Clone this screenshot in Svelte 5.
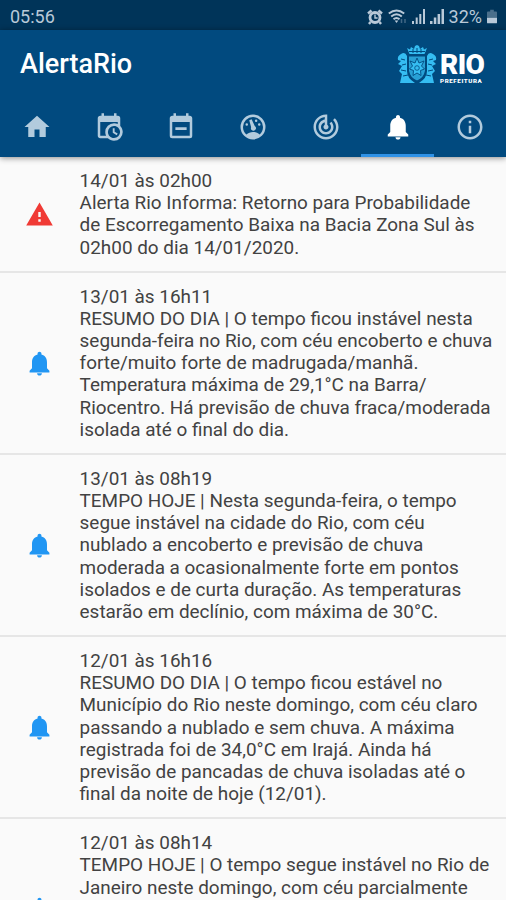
<script>
  const paths = {
    home: 'M10,20V14H14V20H19V12H22L12,3L2,12H5V20H10Z',
    calendarClock:
      'M15,13H16.5V15.82L18.94,17.23L18.19,18.53L15,16.69V13M19,8H5V19H9.67C9.24,18.09 9,17.07 9,16A7,7 0 0,1 16,9C17.07,9 18.09,9.24 19,9.67V8M5,21C3.89,21 3,20.1 3,19V5C3,3.89 3.89,3 5,3H6V1H8V3H16V1H18V3H19A2,2 0 0,1 21,5V11.1C22.24,12.36 23,14.09 23,16A7,7 0 0,1 16,23C14.09,23 12.36,22.24 11.1,21H5M16,11.15A4.85,4.85 0 0,0 11.15,16C11.15,18.68 13.32,20.85 16,20.85A4.85,4.85 0 0,0 20.85,16C20.85,13.32 18.68,11.15 16,11.15Z',
    calendar:
      'M19,19H5V8H19M16,1V3H8V1H6V3H5C3.89,3 3,3.89 3,5V19A2,2 0 0,0 5,21H19A2,2 0 0,0 21,19V5C21,3.89 20.1,3 19,3H18V1M16.5,12.2H7.5V14.4H16.5Z',
    gauge:
      'M17.3,18C19,16.5 20,14.4 20,12A8,8 0 0,0 4,12C4,14.4 5,16.5 6.7,18C8.2,16.7 10,16 12,16C14,16 15.9,16.7 17.3,18M12,2A10,10 0 0,1 12,22A10,10 0 0,1 12,2M7,9A1,1 0 0,1 7,11A1,1 0 0,1 7,9M17,9A1,1 0 0,1 17,11A1,1 0 0,1 17,9M14.5,6A1,1 0 0,1 14.5,8A1,1 0 0,1 14.5,6M9,6.5L10.9,5.8L13.4,11.2A2,2 0 1,1 10.5,12.2Z',
    radar:
      'M19.07 4.93l-1.41 1.41C19.1 7.79 20 9.79 20 12c0 4.42-3.58 8-8 8s-8-3.58-8-8c0-4.08 3.05-7.44 7-7.93v2.02C8.16 6.57 6 9.03 6 12c0 3.31 2.69 6 6 6s6-2.69 6-6c0-1.66-.67-3.16-1.76-4.24l-1.41 1.41C15.55 9.9 16 10.9 16 12c0 2.21-1.79 4-4 4s-4-1.79-4-4c0-1.86 1.28-3.41 3-3.86v2.14c-.6.35-1 .98-1 1.72 0 1.1.9 2 2 2s2-.9 2-2c0-.74-.4-1.38-1-1.72V2h-1C6.48 2 2 6.48 2 12s4.48 10 10 10 10-4.48 10-10c0-2.76-1.12-5.26-2.93-7.07z',
    bell: 'M12 22c1.1 0 2-.7 2-1.9h-4c0 1.2.89 1.9 2 1.9zm6.2-6v-5c0-3.27-1.64-5.74-4.6-6.42V3.8c0-.83-.77-1.5-1.6-1.5s-1.6.67-1.6 1.5v.78C7.44 5.26 5.8 7.73 5.8 11v5l-2 2v1.5h16.4V18l-2-2z',
    info: 'M11 17h2v-6h-2v6zm1-15C6.48 2 2 6.48 2 12s4.48 10 10 10 10-4.48 10-10S17.52 2 12 2zm0 18c-4.41 0-8-3.59-8-8s3.59-8 8-8 8 3.59 8 8-3.59 8-8 8zM11 9h2V7h-2v2z',
    warning: 'M1 21h22L12 2 1 21zm12-3h-2v-2h2v2zm0-4h-2v-4h2v4z',
  };

  const tabs = ['home', 'calendarClock', 'calendar', 'gauge', 'radar', 'bell', 'info'];
  let activeTab = 'bell';

  const alerts = [
    {
      icon: 'warning',
      date: '14/01 às 02h00',
      lines: [
        'Alerta Rio Informa: Retorno para Probabilidade',
        'de Escorregamento Baixa na Bacia Zona Sul às',
        '02h00 do dia 14/01/2020.',
      ],
    },
    {
      icon: 'bell',
      date: '13/01 às 16h11',
      lines: [
        'RESUMO DO DIA | O tempo ficou instável nesta',
        'segunda-feira no Rio, com céu encoberto e chuva',
        'forte/muito forte de madrugada/manhã.',
        'Temperatura máxima de 29,1°C na Barra/',
        'Riocentro. Há previsão de chuva fraca/moderada',
        'isolada até o final do dia.',
      ],
    },
    {
      icon: 'bell',
      date: '13/01 às 08h19',
      lines: [
        'TEMPO HOJE | Nesta segunda-feira, o tempo',
        'segue instável na cidade do Rio, com céu',
        'nublado a encoberto e previsão de chuva',
        'moderada a ocasionalmente forte em pontos',
        'isolados e de curta duração. As temperaturas',
        'estarão em declínio, com máxima de 30°C.',
      ],
    },
    {
      icon: 'bell',
      date: '12/01 às 16h16',
      lines: [
        'RESUMO DO DIA | O tempo ficou estável no',
        'Município do Rio neste domingo, com céu claro',
        'passando a nublado e sem chuva. A máxima',
        'registrada foi de 34,0°C em Irajá. Ainda há',
        'previsão de pancadas de chuva isoladas até o',
        'final da noite de hoje (12/01).',
      ],
    },
    {
      icon: 'bell',
      date: '12/01 às 08h14',
      lines: [
        'TEMPO HOJE | O tempo segue instável no Rio de',
        'Janeiro neste domingo, com céu parcialmente',
      ],
      cut: true,
    },
  ];
</script>

<style>
  :global(body) {
    background: #fafafa;
  }
  .screen {
    height: 900px;
    overflow: hidden;
    display: flex;
    flex-direction: column;
    font-family: Roboto, sans-serif;
    background: #fafafa;
  }
  .status {
    flex: none;
    height: 30px;
    padding: 3px 9px 0 10px;
    box-sizing: border-box;
    display: flex;
    align-items: center;
    justify-content: space-between;
    background: #003459;
    color: #b9c9d8;
    font-size: 18px;
  }
  .status-icons {
    display: flex;
    align-items: center;
    gap: 5px;
  }
  .status-icons svg {
    display: block;
  }
  .header {
    flex: none;
    height: 127px;
    background: #014a7f;
    box-shadow: 0 1px 6px rgba(0, 0, 0, 0.45);
    z-index: 1;
  }
  .title-bar {
    height: 68px;
    padding: 0 22px 0 20px;
    display: flex;
    align-items: center;
    justify-content: space-between;
  }
  h1 {
    margin: 0;
    font-size: 27px;
    font-weight: 500;
    color: #fff;
  }
  .logo {
    display: flex;
    align-items: center;
    gap: 3px;
    color: #fff;
    font-weight: 900;
  }
  .logo svg {
    display: block;
  }
  .logo-text {
    width: 44px;
    padding-top: 7px;
    white-space: nowrap;
  }
  .logo-name {
    font-size: 28px;
    line-height: 26px;
    letter-spacing: -0.6px;
  }
  .logo-sub {
    font-size: 6.2px;
    line-height: 6px;
    letter-spacing: 0.6px;
  }
  .tabs {
    height: 59px;
    display: flex;
  }
  .tab {
    flex: 1;
    padding: 2px 0 0 1px;
    border: 0;
    border-bottom: 3px solid transparent;
    background: none;
    color: #b2cbdd;
    display: flex;
    align-items: center;
    justify-content: center;
  }
  .tab.active {
    color: #fff;
    border-bottom-color: #2f92e6;
  }
  .tab svg {
    display: block;
    width: 30px;
    height: 30px;
  }
  .alert {
    flex: none;
    display: flex;
    align-items: center;
    box-sizing: border-box;
    border-bottom: 2px solid #e6e6e6;
    padding: 13px 0 12px;
  }
  .alert.cut {
    height: 182px;
  }
  .alert-icon {
    flex: none;
    width: 79.6px;
    display: flex;
    justify-content: center;
    color: #2196f3;
  }
  .alert-icon.warning {
    color: #f03a35;
  }
  .alert-icon svg {
    width: 29px;
    height: 29px;
  }
  .alert.cut .alert-text {
    align-self: flex-start;
  }
  .alert-text {
    font-size: 18.91px;
    line-height: 22.17px;
    color: #424242;
  }
  .alert-text p {
    margin: 0;
    white-space: nowrap;
  }
</style>

{#snippet icon(name)}
  <svg viewBox="0 0 24 24" fill="currentColor" fill-rule="evenodd"><path d={paths[name]} /></svg>
{/snippet}

<div class="screen">
  <div class="status">
    <span>05:56</span>
    <div class="status-icons">
      <!-- alarm -->
      <svg width="16" height="16" viewBox="0 0 16 16" fill="none" stroke="currentColor">
        <circle cx="8" cy="8.5" r="5" stroke-width="2.8" />
        <path d="M8 5.5V9h2.6" stroke-width="1.4" />
        <path d="M1 4.5L4.5 1.5M15 4.5L11.5 1.5M3.5 13L2 15M12.5 13L14 15" stroke-width="2.4" />
      </svg>
      <!-- wifi -->
      <svg width="19" height="16" viewBox="0 0 19 16" fill="none" stroke="currentColor" stroke-width="2">
        <path d="M.8 4.5Q8.5-1.5 16.2 4.5M3.2 7.5Q8.5 3 13.8 7.5M5.5 10.3Q8.5 7.6 11.5 10.3" />
        <path d="M6.7 11.5h3.6L8.5 14z" fill="currentColor" stroke="none" />
        <path d="M13.5 10v4M17 10v4" stroke-width="1.5" opacity=".35" />
      </svg>
      <svg width="13" height="15" viewBox="0 0 13 15" fill="currentColor">
        <path d="M0 12h2v3H0zM3.7 8.5h2V15h-2zM7.3 5h2v10h-2zM11 0h2v15h-2z" />
      </svg>
      <svg width="14" height="15" viewBox="0 0 14 15" fill="currentColor">
        <path d="M0 12h2.5v3H0zM3.8 8.5h2.5V15H3.8zM7.6 5h2.5v10H7.6zM11.5 0H14v15h-2.5z" />
      </svg>
      <span>32%</span>
      <svg width="10" height="15" viewBox="0 0 11 15" fill="currentColor">
        <path d="M3.5 0h4v2H10q1 0 1 1v6H0V3q0-1 1-1h2.5z" opacity=".4" />
        <path d="M0 9h11v5q0 1-1 1H1q-1 0-1-1z" />
      </svg>
    </div>
  </div>

  <div class="header">
    <div class="title-bar">
      <h1>AlertaRio</h1>
      <div class="logo">
        <!-- city crest: crown, shield and the two dolphins -->
        <svg width="40" height="39" viewBox="0 0 40 39">
          <g fill="#35bdf2">
            <path d="M10 3l3 1.5L14 2l3 2 1-3 2-1 2 1 1 3 3-2 1 2.5L30 3l-2.5 6h-15z" />
            <path d="M12 11.5h16v14q-1 7-8 10-7-3-8-10z" opacity=".75" />
            <path d="M10 11Q8 6 4 9q-4 2-3 6l3 1-3 3 4 2-3 5 3 3-2 9h15q-8-5-8-12V13z" />
            <path d="M30 11q2-5 6-2 4 2 3 6l-3 1 3 3-4 2 3 5-3 3 2 9H22q8-5 8-12V13z" />
          </g>
          <g fill="none" stroke="#014a7f" stroke-width="1">
            <path d="M12 6.5h16M16 4v4M20 3v5M24 4v4M11 10.5h18v15q-1 8-9 11-8-3-9-11z" />
            <path d="M4 14l4 1M5 20l4-1M4 25l5 1M6 31l5-1M36 14l-4 1M35 20l-4-1M36 25l-5 1M34 31l-5-1" />
          </g>
          <path
            d="M20 13l2 5 5-2-2.5 5 3 3-4 1.5.5 5L20 28l-4 2.5.5-5-4-1.5 3-3L13 16l5 2z"
            fill="#35bdf2"
            stroke="#014a7f"
            stroke-width=".9"
          />
          <circle cx="20" cy="23" r="2.3" fill="none" stroke="#014a7f" stroke-width=".8" />
        </svg>
        <div class="logo-text">
          <div class="logo-name">RIO</div>
          <div class="logo-sub">PREFEITURA</div>
        </div>
      </div>
    </div>
    <div class="tabs">
      {#each tabs as tab (tab)}
        <button class="tab" class:active={tab === activeTab} aria-label={tab} on:click={() => (activeTab = tab)}>
          {@render icon(tab)}
        </button>
      {/each}
    </div>
  </div>

  {#each alerts as alert (alert.date)}
    <div class="alert" class:cut={alert.cut}>
      <div class={`alert-icon ${alert.icon}`}>
        {@render icon(alert.icon)}
      </div>
      <div class="alert-text">
        <p>{alert.date}</p>
        {#each alert.lines as line}
          <p>{line}</p>
        {/each}
      </div>
    </div>
  {/each}
</div>
